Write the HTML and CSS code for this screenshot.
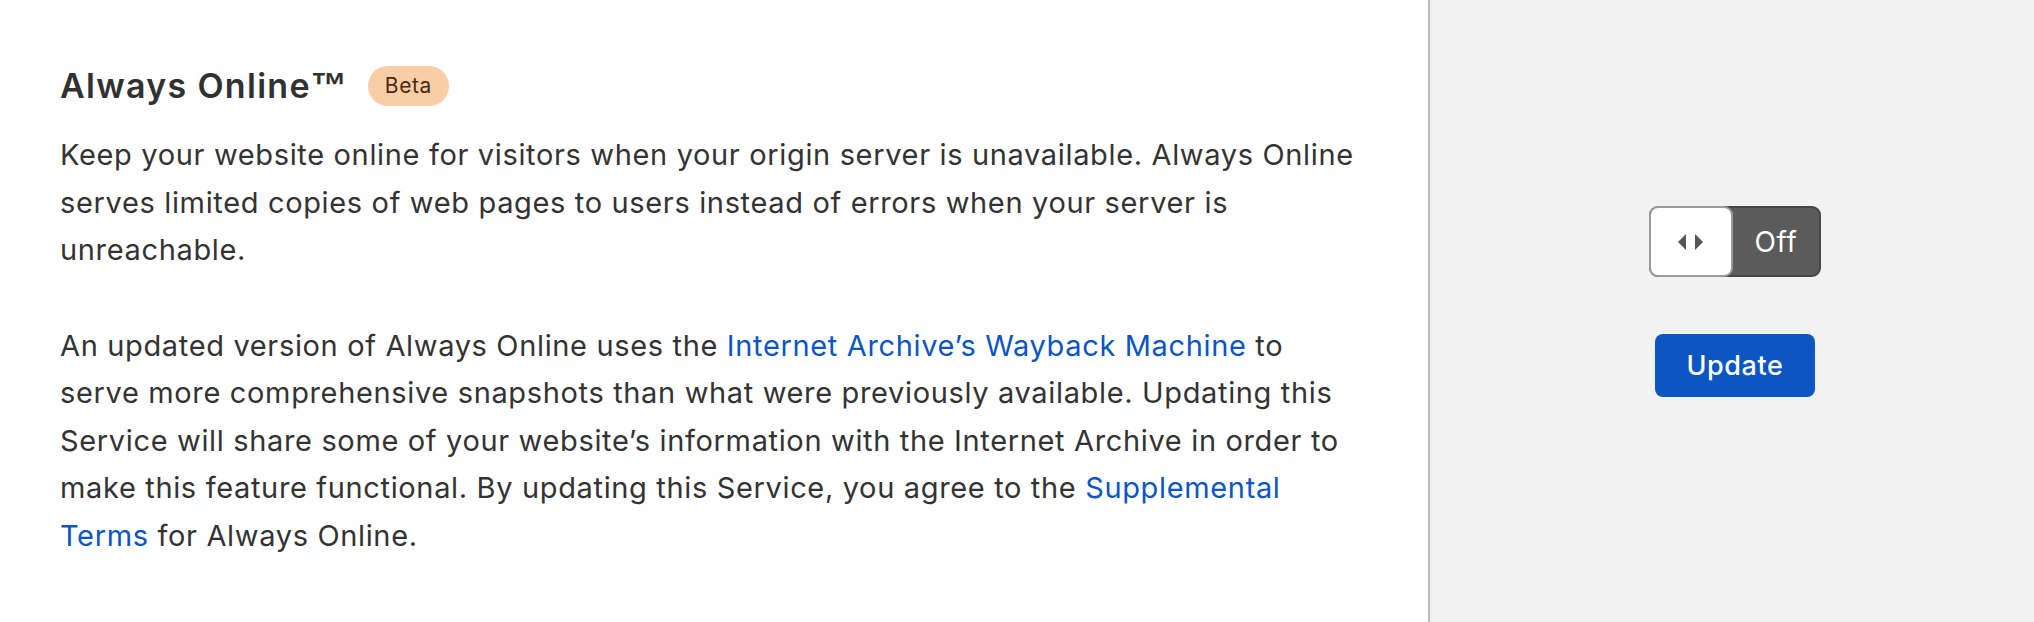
FILE: index.html
```html
<!DOCTYPE html>
<html lang="en">

<head>
    <meta charset="UTF-8">
    <meta name="viewport" content="width=device-width, initial-scale=1.0">
    <title>Always Online</title>
    <link rel="stylesheet" href="styles.css">
</head>

<body>
    <div class="card">
        <div class="card-main">
            <div class="card-title">
                <h2>Always Online<span class="tm">™</span></h2>
                <span class="badge">Beta</span>
            </div>
            <p>Keep your website online for visitors when your origin server is unavailable. Always Online serves limited copies of web pages to users instead of errors when your server is unreachable.</p>
            <p class="second">An updated version of Always Online uses the <a href="#">Internet Archive’s Wayback Machine</a> to serve more comprehensive snapshots than what were previously available. Updating this Service will share some of your website’s information with the Internet Archive in order to make this feature functional. By updating this Service, you agree to the <a href="#">Supplemental Terms</a> for Always Online.</p>
        </div>
        <div class="card-side">
            <div class="toggle">
                <span class="knob">
                    <svg width="26" height="20" viewBox="0 0 26 20">
                        <path d="M8 2 L0 10 L8 18 Z" fill="#555"/>
                        <path d="M17 2 L25 10 L17 18 Z" fill="#555"/>
                    </svg>
                </span>
                <span class="toggle-label">Off</span>
            </div>
            <button class="btn-update">Update</button>
        </div>
    </div>
</body>

</html>
```

FILE: styles.css
```css
html,
body {
    margin: 0;
    padding: 0;
}

body {
    font-family: Inter, "Noto Sans", sans-serif;
    color: #333;
    background-color: #fff;
}

.card {
    display: flex;
    height: 622px;
}

.card-main {
    flex: 1;
    padding: 66px 72px 0 60px;
    border-right: 2px solid #bdbdbd;
}

.card-title {
    display: flex;
    align-items: center;
    height: 40px;
}

.card-title h2 {
    margin: 0;
    font-size: 34px;
    font-weight: 600;
    line-height: 40px;
    letter-spacing: 1.3px;
    color: #313131;
}

.tm {
    font-family: "Liberation Sans", sans-serif;
    font-size: 36px;
    font-weight: 700;
    letter-spacing: 0;
    margin-left: 0;
}

.badge {
    margin-left: 21px;
    height: 40px;
    padding: 0 17px;
    border-radius: 20px;
    background-color: #f9cda6;
    color: #4a2a12;
    font-size: 21px;
    letter-spacing: 0.6px;
    line-height: 40px;
}

p {
    margin: 25px 0 0 0;
    font-size: 29px;
    line-height: 47.5px;
    letter-spacing: 0.65px;
}

p.second {
    margin-top: 48px;
}

a {
    color: #0b55c4;
    text-decoration: none;
}

.card-side {
    width: 598px;
    background-color: #f2f2f2;
    display: flex;
    flex-direction: column;
    align-items: center;
    justify-content: center;
    padding: 0 0 19px 6px;
}

.toggle {
    display: flex;
    width: 168px;
    height: 67px;
    border: 2px solid #474747;
    border-radius: 9px;
    background-color: #5b5b5b;
}

.knob {
    display: flex;
    align-items: center;
    justify-content: center;
    width: 80px;
    margin: -2px 0 -2px -2px;
    border: 2px solid #9b9b9b;
    border-radius: 9px;
    background-color: #fff;
}

.toggle-label {
    flex: 1;
    display: flex;
    align-items: center;
    justify-content: center;
    color: #fff;
    font-size: 28px;
    letter-spacing: 0.6px;
}

.btn-update {
    margin-top: 57px;
    width: 160px;
    height: 63px;
    border: none;
    border-radius: 8px;
    background-color: #0b56c1;
    color: #fff;
    font-family: Inter, "Noto Sans", sans-serif;
    font-size: 27px;
    font-weight: 500;
    letter-spacing: 0.6px;
}
```
